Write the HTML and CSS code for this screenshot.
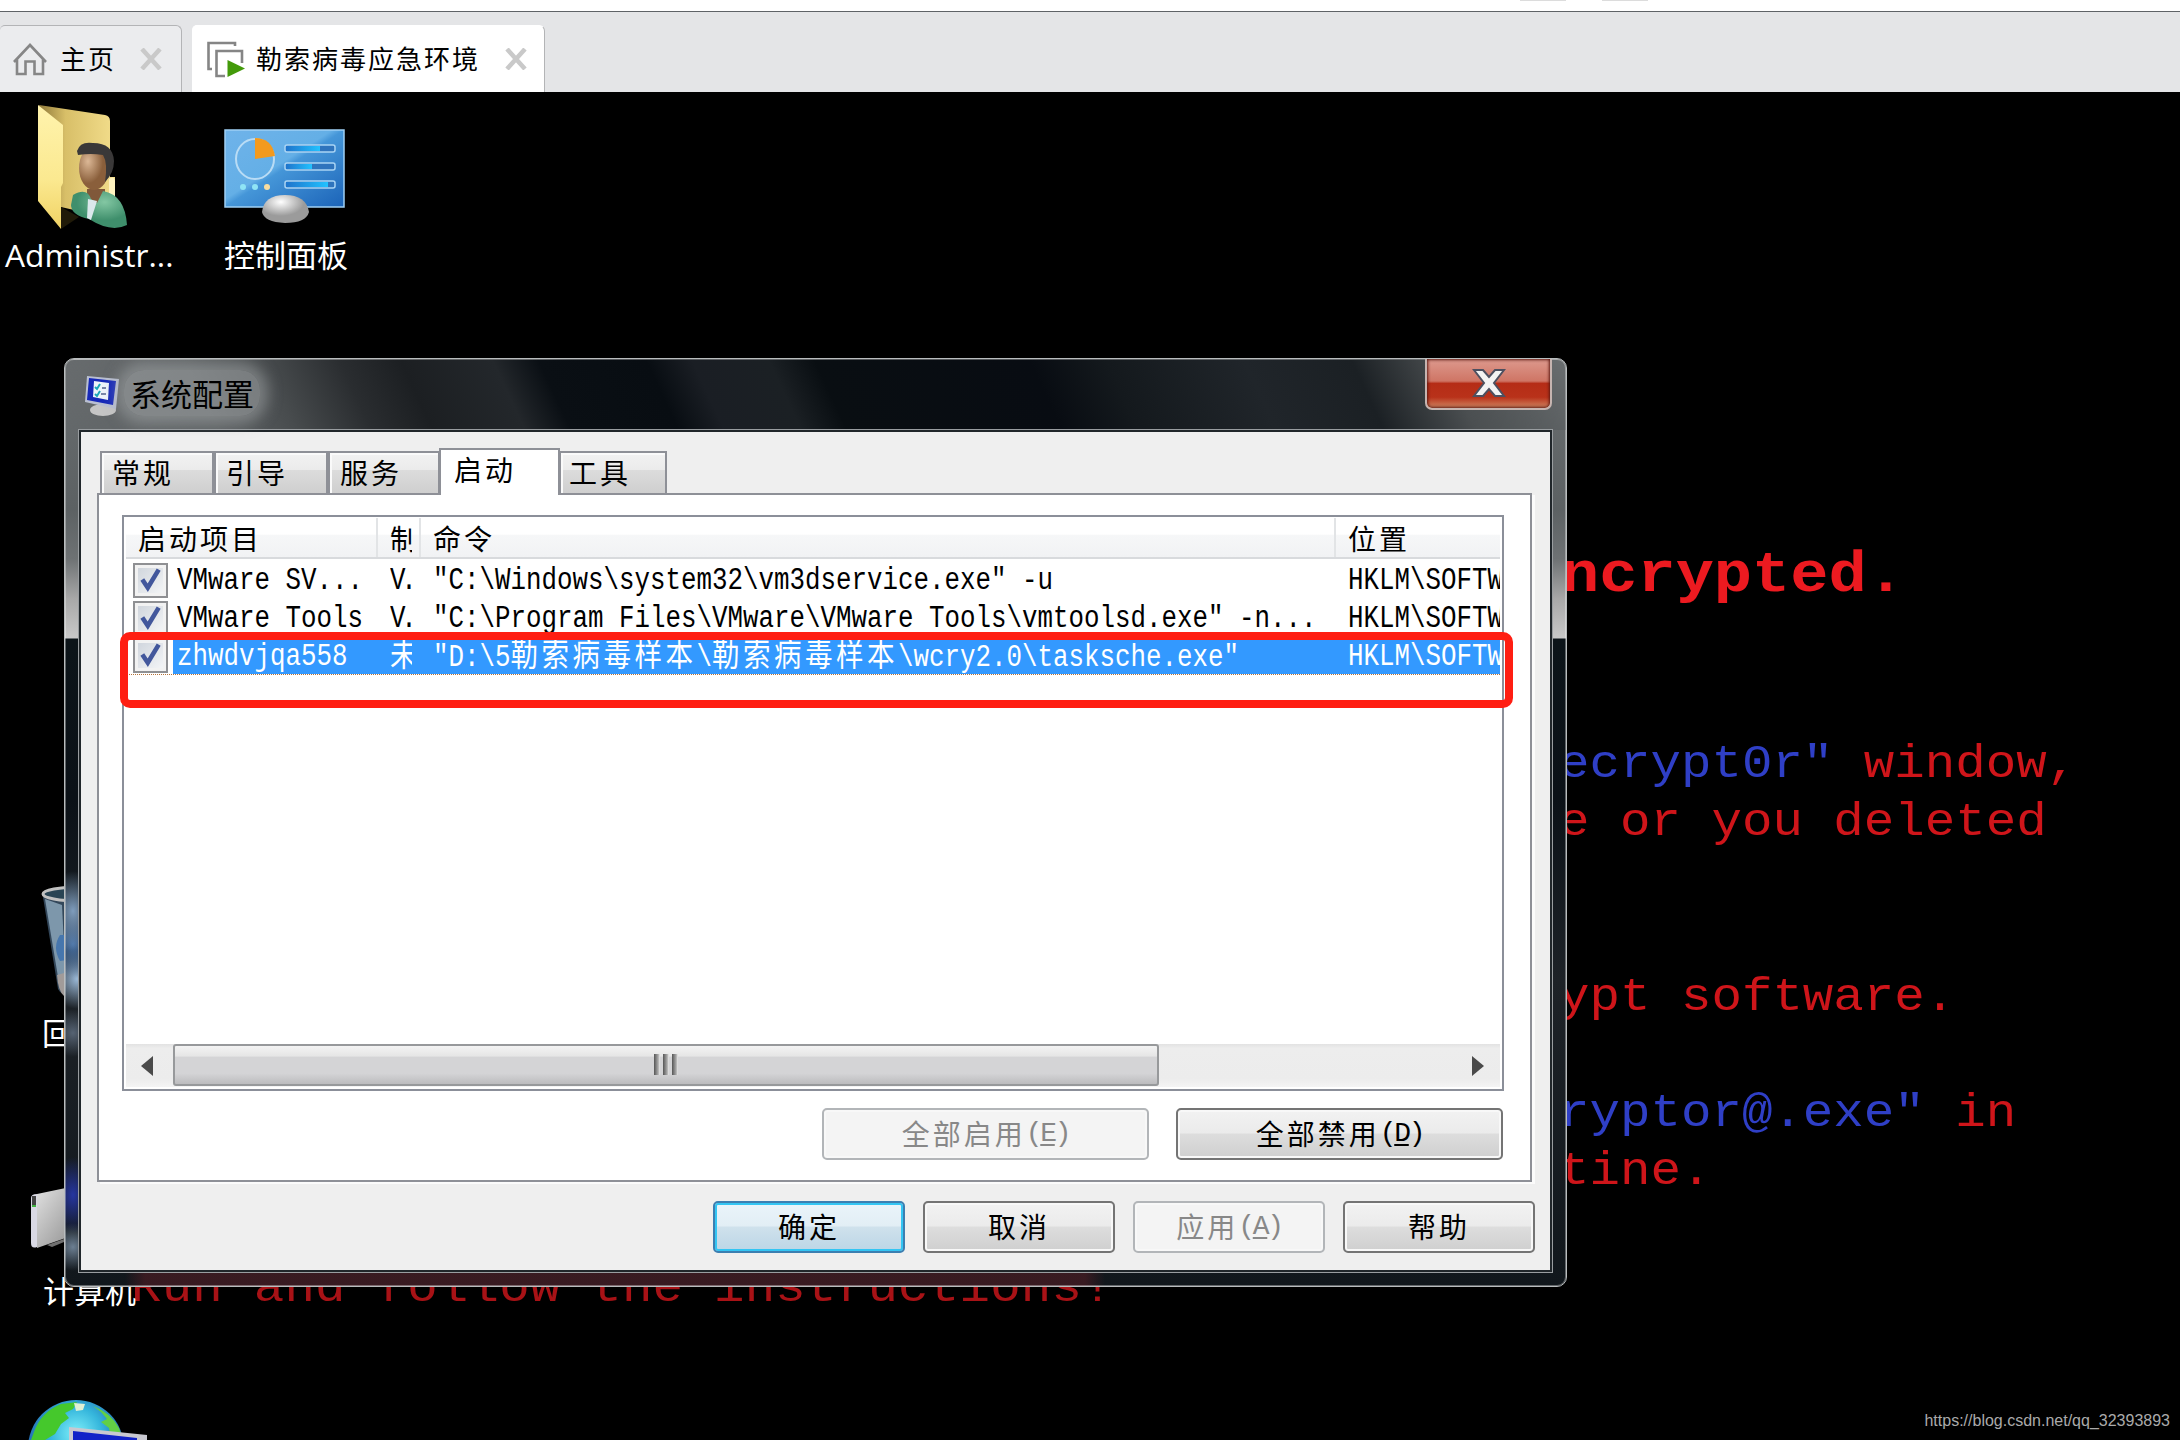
FILE: index.html
```html
<!DOCTYPE html>
<html lang="zh-CN">
<head>
  <meta charset="UTF-8" />
  <title>系统配置</title>
  <link rel="stylesheet" href="styles.css">
</head>
<body>

  <!-- VM TAB BAR -->
  <div class="toolbar-edge"><i></i><i></i></div>
  <div class="vm-tabs">
    <div class="vm-tab home">
      <svg class="home-icon" width="36" height="34" viewBox="0 0 36 34" fill="none" stroke="#868686" stroke-width="2.6">
        <path d="M2 20 L18 3 L34 20"/>
        <path d="M5 17.500V32H13.500V19.500H22.500V32H31V17.500"/>
      </svg>
      <span class="vm-name">主页</span>
      <svg class="tab-x" width="22" height="22" viewBox="0 0 22 22"><path d="M2 1L20 21M20 1L2 21" stroke="#c9c9c9" stroke-width="4.500"/></svg>
    </div>
    <div class="vm-tab active">
      <svg class="vm-icon" width="38" height="37" viewBox="0 0 38 37" fill="none" stroke="#858585" stroke-width="2.600">
        <path d="M5 28H1.500V2H28V5"/>
        <path d="M18 35H9.500V10H35V22"/>
        <path d="M20.500 19L38 27.500L20.500 36Z" fill="#439a0a" stroke="none"/>
      </svg>
      <span class="vm-name">勒索病毒应急环境</span>
      <svg class="tab-x" width="22" height="22" viewBox="0 0 22 22"><path d="M2 1L20 21M20 1L2 21" stroke="#c9c9c9" stroke-width="4.500"/></svg>
    </div>
  </div>

  <div class="desktop">

    <!-- WALLPAPER -->
    <div class="wall headline">ncrypted.</div>
    <pre class="wall side-text"><b>ecrypt0r"</b> window,
e or you deleted


ypt software.

<b>ryptor@.exe"</b> in
tine.</pre>
    <div class="wall last-line">Run and follow the instructions!</div>

    <!-- DESKTOP ICONS -->
    <div class="shortcut user">
      <svg width="92" height="128" viewBox="0 0 92 128">
        <defs>
          <linearGradient id="fold" x1="0" x2="1"><stop offset="0" stop-color="#8f793a"/><stop offset=".35" stop-color="#d8bf68"/><stop offset="1" stop-color="#f3de8c"/></linearGradient>
          <linearGradient id="flap" x1="0" y1="0" x2="0" y2="1"><stop offset="0" stop-color="#fff3ad"/><stop offset=".6" stop-color="#fbe990"/><stop offset="1" stop-color="#f0d264"/></linearGradient>
          <radialGradient id="face" cx=".3" cy=".35"><stop offset="0" stop-color="#dcb896"/><stop offset="1" stop-color="#8a5f3b"/></radialGradient>
          <radialGradient id="coat" cx=".6" cy=".3"><stop offset="0" stop-color="#83c7a3"/><stop offset="1" stop-color="#3f8f6c"/></radialGradient>
        </defs>
        <path d="M2 2L68 12Q73 13 73 18V74H78V96L50 110L24 104Z" fill="url(#fold)"/>
        <path d="M72 76Q77 72 78 78V100H72Z" fill="#fff3c0"/>
        <path d="M1 2L26 22V80L24 84V126L1 98Z" fill="url(#flap)"/>
        <path d="M24 104L24 126L42 114Z" fill="#201a08"/>
        <path d="M50 86H68V104H50Z" fill="#80583a"/>
        <path d="M36 92Q50 84 54 96L60 100L66 88Q88 92 90 122Q74 130 52 116Q34 112 34 102Z" fill="url(#coat)"/>
        <path d="M51 96L60 98L54 117L50 115Z" fill="#dbe8ec"/>
        <ellipse cx="57" cy="65" rx="15" ry="22" fill="url(#face)"/>
        <path d="M40 48Q43 38 56 40Q76 40 77 58Q77 70 68 79Q71 60 66 52Q54 50 41 52Z" fill="#3a3838"/>
      </svg>
      <span class="latin">Administr...</span>
    </div>

    <div class="shortcut panel-icon">
      <svg width="122" height="96" viewBox="0 0 122 96">
        <defs>
          <linearGradient id="cp" x1="0" y1="0" x2="1" y2="1"><stop offset="0" stop-color="#6fb3ea"/><stop offset=".45" stop-color="#64afe6"/><stop offset=".5" stop-color="#4596d8"/><stop offset="1" stop-color="#1b63b8"/></linearGradient>
          <linearGradient id="bar" x1="0" x2="1"><stop offset="0" stop-color="#1f74cc"/><stop offset="1" stop-color="#22c2ff"/></linearGradient>
          <radialGradient id="base" cx=".4" cy=".25"><stop offset="0" stop-color="#fff"/><stop offset="1" stop-color="#9b9b9b"/></radialGradient>
        </defs>
        <rect x="1" y="1" width="119" height="77" fill="url(#cp)" stroke="#9fd0f5" stroke-width="1.500"/>
        <ellipse cx="31" cy="30" rx="19" ry="20" fill="none" stroke="#b9dcf5" stroke-width="2"/>
        <path d="M31 30V9Q48 9 51 27Z" fill="#f39a1e"/>
        <g stroke="#a9d4f4" stroke-width="1.500">
          <rect x="61" y="16" width="50" height="7" rx="2" fill="#2f74bd"/><rect x="61" y="34" width="50" height="7" rx="2" fill="#2f74bd"/><rect x="61" y="52" width="50" height="7" rx="2" fill="#2f74bd"/>
        </g>
        <g fill="url(#bar)"><rect x="62" y="17" width="34" height="5"/><rect x="62" y="35" width="26" height="5"/><rect x="62" y="53" width="42" height="5"/></g>
        <g fill="#8fe4f5"><circle cx="19" cy="58" r="3"/><circle cx="31" cy="58" r="3"/></g><circle cx="43" cy="58" r="3" fill="#f8dda0"/>
        <path d="M38 83Q40 66 61 66Q82 66 85 83Q82 94 61 94Q40 93 38 83Z" fill="url(#base)"/>
      </svg>
      <span>控制面板</span>
    </div>

    <div class="shortcut bin">
      <svg width="80" height="112" viewBox="0 0 80 112">
        <path d="M3 12L18 104Q21 111 34 111H60L76 12Z" fill="#33475a"/>
        <path d="M5 14L19 98L26 100L22 20Z" fill="#7d97ab"/>
        <path d="M20 50Q12 62 20 76L34 74V50Z" fill="#4676ad"/>
        <path d="M17 90L24 88V111Q18 106 17 90Z" fill="#a19b99"/>
        <ellipse cx="40" cy="9" rx="37" ry="7" fill="#294454" stroke="#c0c0c0" stroke-width="3"/>
      </svg>
      <span>回收站</span>
    </div>

    <div class="shortcut computer">
      <svg width="80" height="66" viewBox="0 0 80 66">
        <defs><linearGradient id="case" x1="0" y1="0" x2="1" y2="1"><stop offset="0" stop-color="#e2e2e2"/><stop offset="1" stop-color="#8a8a8a"/></linearGradient></defs>
        <path d="M7 9L50 0V48L7 63Z" fill="url(#case)"/>
        <path d="M1 13Q1 9 7 9V62Q1 64 1 58Z" fill="#d9d9e4"/>
        <path d="M2 11H6V20H2Z" fill="#444"/><path d="M2 20H6V22H2Z" fill="#3fb33f"/>
        <path d="M17 60L34 54V57L22 62Z" fill="#707070"/>
      </svg>
      <span>计算机</span>
    </div>

    <svg class="network" width="124" height="40" viewBox="0 0 124 40">
      <defs><radialGradient id="sea" cx=".5" cy=".35" r=".6"><stop offset="0" stop-color="#7ff0fa"/><stop offset=".45" stop-color="#35b6dc"/><stop offset="1" stop-color="#1b4da0"/></radialGradient></defs>
      <circle cx="49" cy="48" r="48" fill="url(#sea)"/>
      <path d="M7 32Q14 12 34 4L50 2L46 9L38 13L42 18L34 24L28 34L18 40H4Z" fill="#45c82c"/>
      <path d="M47 3L58 4L56 10L49 11Z" fill="#dff0d4"/>
      <path d="M66 6Q84 13 92 28L96 40H84L82 28L74 22L80 19L74 12Z" fill="#62cf45"/>
      <path d="M42 27L120 35V40H42Z" fill="#c8c8d0"/>
      <path d="M46 31L110 38V40H46Z" fill="#1122c8"/>
    </svg>

    <!-- SYSTEM CONFIGURATION WINDOW -->
    <div class="window">
      <div class="titlebar">
        <svg class="title-icon" width="37" height="42" viewBox="0 0 37 42">
          <ellipse cx="19" cy="35" rx="13" ry="6" fill="#c5c5c5"/>
          <path d="M3 1L35 4L32 34L1 27Z" fill="#b9bfd2"/>
          <path d="M5 3L32 6L29 30L3 25Z" fill="#1628b8"/>
          <path d="M10 6L25 8L24 25L9 22Z" fill="#eef3fa"/>
          <path d="M11 12L13 14L16 9M11 19L13 21L16 16" stroke="#1aa6b8" stroke-width="2" fill="none"/>
          <path d="M18 13H22M17 19H22" stroke="#7a86a8" stroke-width="2"/>
        </svg>
        <span class="title">系统配置</span>
        <div class="close">
          <svg width="34" height="28" viewBox="0 0 34 28">
            <path d="M2 1H11L17 8L23 1H32L22 14L32 27H23L17 20L11 27H2L12 14Z" fill="#f3f3f3" stroke="#4d5060" stroke-width="2"/>
          </svg>
        </div>
      </div>

      <div class="client">
        <div class="tabs">
          <div class="tab t1">常规</div>
          <div class="tab t2">引导</div>
          <div class="tab t3">服务</div>
          <div class="tab current">启动</div>
          <div class="tab t5">工具</div>
        </div>

        <div class="sheet">
          <div class="list">
            <div class="row header">
              <div>启动项目</div><div>制造商</div><div>命令</div><div>位置</div>
            </div>
            <div class="row">
              <div class="item"><svg class="check" viewBox="0 0 34 34"><path d="M8 16L14 25L26 5" /></svg><p class="mono">VMware SV...</p></div>
              <div><p class="mono tight">V.</p></div>
              <div><p class="mono">"C:\Windows\system32\vm3dservice.exe" -u</p></div>
              <div><p class="mono">HKLM\SOFTWARE</p></div>
            </div>
            <div class="row">
              <div class="item"><svg class="check" viewBox="0 0 34 34"><path d="M8 16L14 25L26 5" /></svg><p class="mono">VMware Tools</p></div>
              <div><p class="mono tight">V.</p></div>
              <div><p class="mono">"C:\Program Files\VMware\VMware Tools\vmtoolsd.exe" -n...</p></div>
              <div><p class="mono">HKLM\SOFTWARE</p></div>
            </div>
            <div class="row selected">
              <div class="item"><svg class="check" viewBox="0 0 34 34"><path d="M8 16L14 25L26 5" /></svg><p class="mono">zhwdvjqa558</p></div>
              <div><p class="mono"><span>未知</span></p></div>
              <div><p class="mono">"D:\5<span>勒索病毒样本</span>\<span>勒索病毒样本</span>\wcry2.0\tasksche.exe"</p></div>
              <div><p class="mono">HKLM\SOFTWARE</p></div>
            </div>

            <div class="scrollbar">
              <svg class="arrow" width="12" height="20" viewBox="0 0 12 20"><path d="M12 0V20L0 10Z" fill="#4a4a4a"/></svg>
              <div class="thumb"><i></i><i></i><i></i></div>
              <svg class="arrow right" width="12" height="20" viewBox="0 0 12 20"><path d="M0 0V20L12 10Z" fill="#4a4a4a"/></svg>
            </div>
          </div>

          <div class="buttons wide">
            <div class="btn disabled">全部启用<em>(<u>E</u>)</em></div>
            <div class="btn">全部禁用<em>(<u>D</u>)</em></div>
          </div>
        </div>

        <div class="buttons">
          <div class="btn default">确定</div>
          <div class="btn">取消</div>
          <div class="btn disabled">应用<em>(<u>A</u>)</em></div>
          <div class="btn">帮助</div>
        </div>
      </div>
    </div>

    <!-- red marker over the third startup item -->
    <div class="marker"></div>

    <div class="watermark">https://blog.csdn.net/qq_32393893</div>
  </div>

</body>
</html>
```
FILE: styles.css
```css
/* ---------------
   GENERAL
   ---------------*/
* {
  box-sizing: border-box;
}
body {
  margin: 0;
  width: 2180px;
  height: 1440px;
  overflow: hidden;
  display: flex;
  flex-direction: column;
  background: #000;
  font-family: "Noto Sans CJK SC", sans-serif;
  color: #000;
}
p, pre {
  margin: 0;
}
svg {
  display: block;
  flex: none;
}

/* ---------------
   VM TAB BAR
   ---------------*/
.toolbar-edge {
  height: 12px;
  flex: none;
  display: flex;
  gap: 36px;
  padding-left: 1520px;
  background: #fff;
  border-bottom: 1px solid #5f6367;
}
.toolbar-edge i {
  width: 46px;
  height: 1px;
  background: #dcdcdc;
}
.vm-tabs {
  height: 80px;
  flex: none;
  display: flex;
  align-items: flex-end;
  gap: 10px;
  background: #e4e5e7;
}
.vm-tab {
  height: 67px;
  display: flex;
  align-items: center;
  background: #ebecee;
  border: 1px solid #b3b4b6;
  border-bottom: none;
  border-left: none;
  border-radius: 5px 6px 0 0;
}
.vm-tab.home {
  width: 182px;
  padding-left: 12px;
}
.vm-tab.active {
  width: 353px;
  padding-left: 15px;
  background: #fff;
  border-top-color: #fff;
}
.vm-name {
  font-size: 26px;
  line-height: 38px;
  letter-spacing: 2px;
  white-space: nowrap;
  padding-bottom: 2px;
}
.home .vm-name { margin: 0 24px 0 12px; }
.active .vm-name { margin: 0 25px 0 11px; }

/* ---------------
   DESKTOP
   ---------------*/
.desktop {
  position: relative;
  flex: 1;
  overflow: hidden;
}
/* flattened a little, the wallpaper letters are wide and low */
.wall {
  position: absolute;
  font-family: "Liberation Mono", monospace;
  font-size: 50.8px;
  line-height: 64.67px;
  white-space: pre;
  color: #cf151a;
  transform: scaleY(0.9);
  transform-origin: top left;
}
.wall b {
  font-weight: normal;
  color: #2f3fc6;
}
.headline {
  left: 1561px;
  top: 455px;
  font-size: 63.7px;
  font-weight: bold;
  color: #ec1a20;
}
.side-text {
  left: 1559px;
  top: 644px;
}
.last-line {
  left: 131px;
  top: 1168px;
  letter-spacing: 0.2px;
  color: #a81216;
}

.shortcut {
  position: absolute;
  display: flex;
  flex-direction: column;
  align-items: flex-start;
  color: #fff;
  font-size: 31px;
  line-height: 40px;
  white-space: nowrap;
}
.user {
  left: 5px;
  top: 11px;
}
.user svg { margin-left: 32px; }
.user .latin {
  margin-top: 4px;
  font-family: "Open Sans", sans-serif;
  font-size: 31.7px;
}
.panel-icon {
  left: 224px;
  top: 37px;
}
.panel-icon span { margin-top: 9px; }
.bin {
  left: 40px;
  top: 793px;
}
.bin span { margin: 15px 0 0 2px; }
.computer {
  left: 30px;
  top: 1093px;
}
.computer span {
  margin: 19px 0 0 13px;
}
.network {
  position: absolute;
  left: 27px;
  top: 1308px;
}
.watermark {
  position: absolute;
  right: 10px;
  bottom: 8px;
  font-family: "Liberation Sans", sans-serif;
  font-size: 16px;
  line-height: 22px;
  color: #aaa;
}

/* ---------------
   WINDOW FRAME
   ---------------*/
.window {
  position: absolute;
  left: 64px;
  top: 266px;
  width: 1503px;
  height: 929px;
  padding: 0 14px 14px 14px;
  border: 1px solid #b9bdbe;
  border-radius: 10px;
  box-shadow: inset 0 0 0 1px rgba(255, 255, 255, 0.35);
  overflow: hidden;
  background:
    radial-gradient(ellipse 26px 40px at 8px 552px, #7f9dbd, transparent),
    radial-gradient(ellipse 26px 34px at 8px 585px, #4a74a8, transparent),
    radial-gradient(ellipse 26px 30px at 12px 620px, #9ab8d6, transparent),
    radial-gradient(ellipse 22px 24px at 8px 674px, #566373, transparent),
    radial-gradient(ellipse 22px 38px at 8px 836px, #2636a0, transparent),
    radial-gradient(ellipse 22px 24px at 8px 888px, #6c7f92, transparent),
    linear-gradient(to right, transparent 60px, rgba(82, 28, 36, 0.6) 80px, rgba(82, 28, 36, 0.6) 1020px, transparent 1040px) 0 100% / 100% 14px no-repeat,
    linear-gradient(to bottom, #6a6e70 0, #5c6163 150px, #6e7274 200px, #a8a8a8 240px, #c8c8c8 279px, #0c1419 280px, #0b1117 440px, #1d2227 620px, #11171c 100%);
}
.titlebar {
  height: 71px;
  margin: 0 -14px;
  padding-left: 19px;
  display: flex;
  align-items: flex-start;
  border-top: 1px solid rgba(255, 255, 255, 0.3);
  background: linear-gradient(65deg, #70757700 0, #5e6264 10%, #484c4e 15%, #2a2d30 20%, #1c1f22 24%, #23272b 30%, #0a0f14 33%, #080d12 40%, #1a1e24 43%, #1b2024 48%, #090e12 51%, #080c12 65%, #14191d 70%, #20252a 79%, #1b2024 86%, #4b4f51 92%, #6a6e7000 100%);
}
.title-icon { margin-top: 15px; }
.title {
  margin: 10px 0 0 3px;
  padding: 0 6px;
  font-size: 31px;
  line-height: 46px;
  border-radius: 20px;
  background: rgba(165, 170, 172, 0.5);
  box-shadow: 0 0 14px 8px rgba(165, 170, 172, 0.5);
}
.close {
  margin: -1px 14px 0 auto;
  width: 127px;
  height: 51px;
  padding-top: 10px;
  display: flex;
  justify-content: center;
  border: 2px solid #c6b4b0;
  border-top: none;
  border-radius: 0 0 7px 7px;
  box-shadow: inset 0 0 3px 1px #5c1710;
  background: linear-gradient(to bottom, #dd9a8e 0, #cf7565 45%, #b52c16 50%, #b9321a 78%, #d08763 100%);
}

/* ---------------
   CLIENT AREA
   ---------------*/
.client {
  height: 842px;
  padding: 16px 15px 0 16px;
  display: flex;
  flex-direction: column;
  border: 2px solid #20262a;
  outline: 1px solid #999da0;
  background: #efefef;
  font-size: 28px;
}
.tabs {
  height: 45px;
  display: flex;
  align-items: flex-end;
  padding-left: 3px;
}
.tab {
  height: 42px;
  padding-left: 10px;
  line-height: 38px;
  letter-spacing: 3px;
  border: 2px solid #8e9097;
  border-bottom: none;
  box-shadow: inset 2px 2px 0 #fafafa;
  background: linear-gradient(to bottom, #f2f2f2 0, #ebebeb 42%, #dcdcdc 43%, #cfcfcf 100%);
}
.t1 { width: 114px; }
.t2 { width: 114px; }
.t3 { width: 112px; }
.t5 { width: 108px; padding-left: 8px; }
.tab.current {
  position: relative;
  width: 121px;
  height: 47px;
  margin: 0 -1px -2px -1px;
  padding-left: 13px;
  background: #fff;
  box-shadow: none;
}
.sheet {
  height: 689px;
  flex: none;
  margin-right: 3px;
  padding: 20px 26px 0 23px;
  border: 2px solid #8e9097;
  box-shadow: 3px 2px 0 #fbfbfb;
  background: #fff;
}

/* ---------------
   STARTUP LIST
   ---------------*/
.list {
  height: 576px;
  display: flex;
  flex-direction: column;
  padding: 1px 2px 0 2px;
  border: 2px solid #8b8f99;
}
.row {
  height: 38px;
  flex: none;
  display: grid;
  grid-template-columns: 252px 43px 915px 1fr;
}
.row > div {
  overflow: hidden;
  padding-left: 12px;
  margin-right: 9px;
}
.row > div:last-child {
  margin-right: 0;
}
.row.header {
  height: 41px;
  margin-bottom: 2px;
  line-height: 40px;
  letter-spacing: 3px;
  border-bottom: 2px solid #d8dadd;
  background: linear-gradient(to bottom, #fff 0, #fff 42%, #f6f7f8 43%, #f1f2f4 100%);
}
.header > div {
  height: 39px;
  white-space: nowrap;
}
.header > div + div {
  box-shadow: -2px 0 0 #e2e4e6;
}
.item {
  display: flex;
  align-items: center;
}
.row > .item {
  padding-left: 7px;
  margin-right: 0;
}
.check {
  width: 35px;
  height: 35px;
  border: 2px solid #8f9093;
  background: linear-gradient(135deg, #ccd2da, #f7f8f9);
  box-shadow: inset 0 0 0 3px #f2f2f2;
}
.check path {
  fill: none;
  stroke: #42579c;
  stroke-width: 5;
}
.item .mono {
  margin-left: 9px;
}
/* half-width letters: 15.5px per column, 31px per Chinese character */
.mono {
  width: 120%;
  flex: none;
  font-family: "Liberation Mono", "Noto Sans CJK SC", monospace;
  font-size: 31px;
  line-height: 40px;
  height: 38px;
  white-space: pre;
  transform: scaleX(0.8333);
  transform-origin: left;
}
.mono span {
  font-family: "Noto Sans CJK SC", sans-serif;
  font-size: 33px;
  line-height: 30px;
  letter-spacing: 4.2px;
}
.tight {
  letter-spacing: -5px;
}
.selected {
  color: #fff;
  background: linear-gradient(#3399ff, #3399ff) 47px 0 no-repeat;
  border-bottom: 1px dotted #b5733a;
}
.scrollbar {
  height: 43px;
  margin-top: auto;
  margin-bottom: 2px;
  padding: 0 16px 0 15px;
  display: flex;
  align-items: center;
  justify-content: space-between;
  background: linear-gradient(to bottom, #e2e2e2 0, #ededed 10%, #ececec 80%, #f4f4f4 100%);
}
.thumb {
  width: 986px;
  height: 42px;
  margin: -2px auto 0 20px;
  display: flex;
  align-items: center;
  justify-content: center;
  gap: 3px;
  border: 2px solid #97999b;
  border-radius: 3px;
  background: linear-gradient(to bottom, #f3f3f3 0, #e6e6e6 26%, #d4d4d6 30%, #d4d4d6 72%, #bcbcbe 100%);
}
.thumb i {
  width: 6px;
  height: 21px;
  background: linear-gradient(to right, #555 0, #aaa 70%, #eee 100%);
}

/* ---------------
   BUTTONS
   ---------------*/
.buttons {
  display: flex;
  justify-content: flex-end;
  gap: 18px;
  margin-top: 19px;
}
.buttons.wide {
  gap: 27px;
  margin: 17px 1px 0 0;
}
.btn {
  width: 192px;
  height: 52px;
  padding-bottom: 2px;
  display: flex;
  align-items: center;
  justify-content: center;
  letter-spacing: 3px;
  border: 2px solid #747474;
  border-radius: 5px;
  box-shadow: inset 0 0 0 2px #f8f8f8;
  background: linear-gradient(to bottom, #f2f2f2 0, #ebebeb 48%, #dddddd 50%, #cfcfcf 100%);
}
.wide .btn {
  width: 327px;
}
.btn em {
  font-family: "Liberation Mono", monospace;
  font-style: normal;
  letter-spacing: -2.3px;
}
.btn u {
  text-underline-offset: 3px;
  text-decoration-thickness: 2px;
}
.btn.disabled {
  color: #888;
  border-color: #b2b5b8;
  background: #f4f4f4;
}
.btn.default {
  border-color: #3c7fb1;
  box-shadow: inset 0 0 0 2px #33c5f3;
  background: linear-gradient(to bottom, #eaf4fa 0, #e2eef5 48%, #cfe1ec 50%, #bcd6e6 100%);
}

/* ---------------
   MARKER
   ---------------*/
.marker {
  position: absolute;
  left: 120px;
  top: 540px;
  width: 1393px;
  height: 76px;
  border: 8px solid #ff1e12;
  border-radius: 10px;
}
```
